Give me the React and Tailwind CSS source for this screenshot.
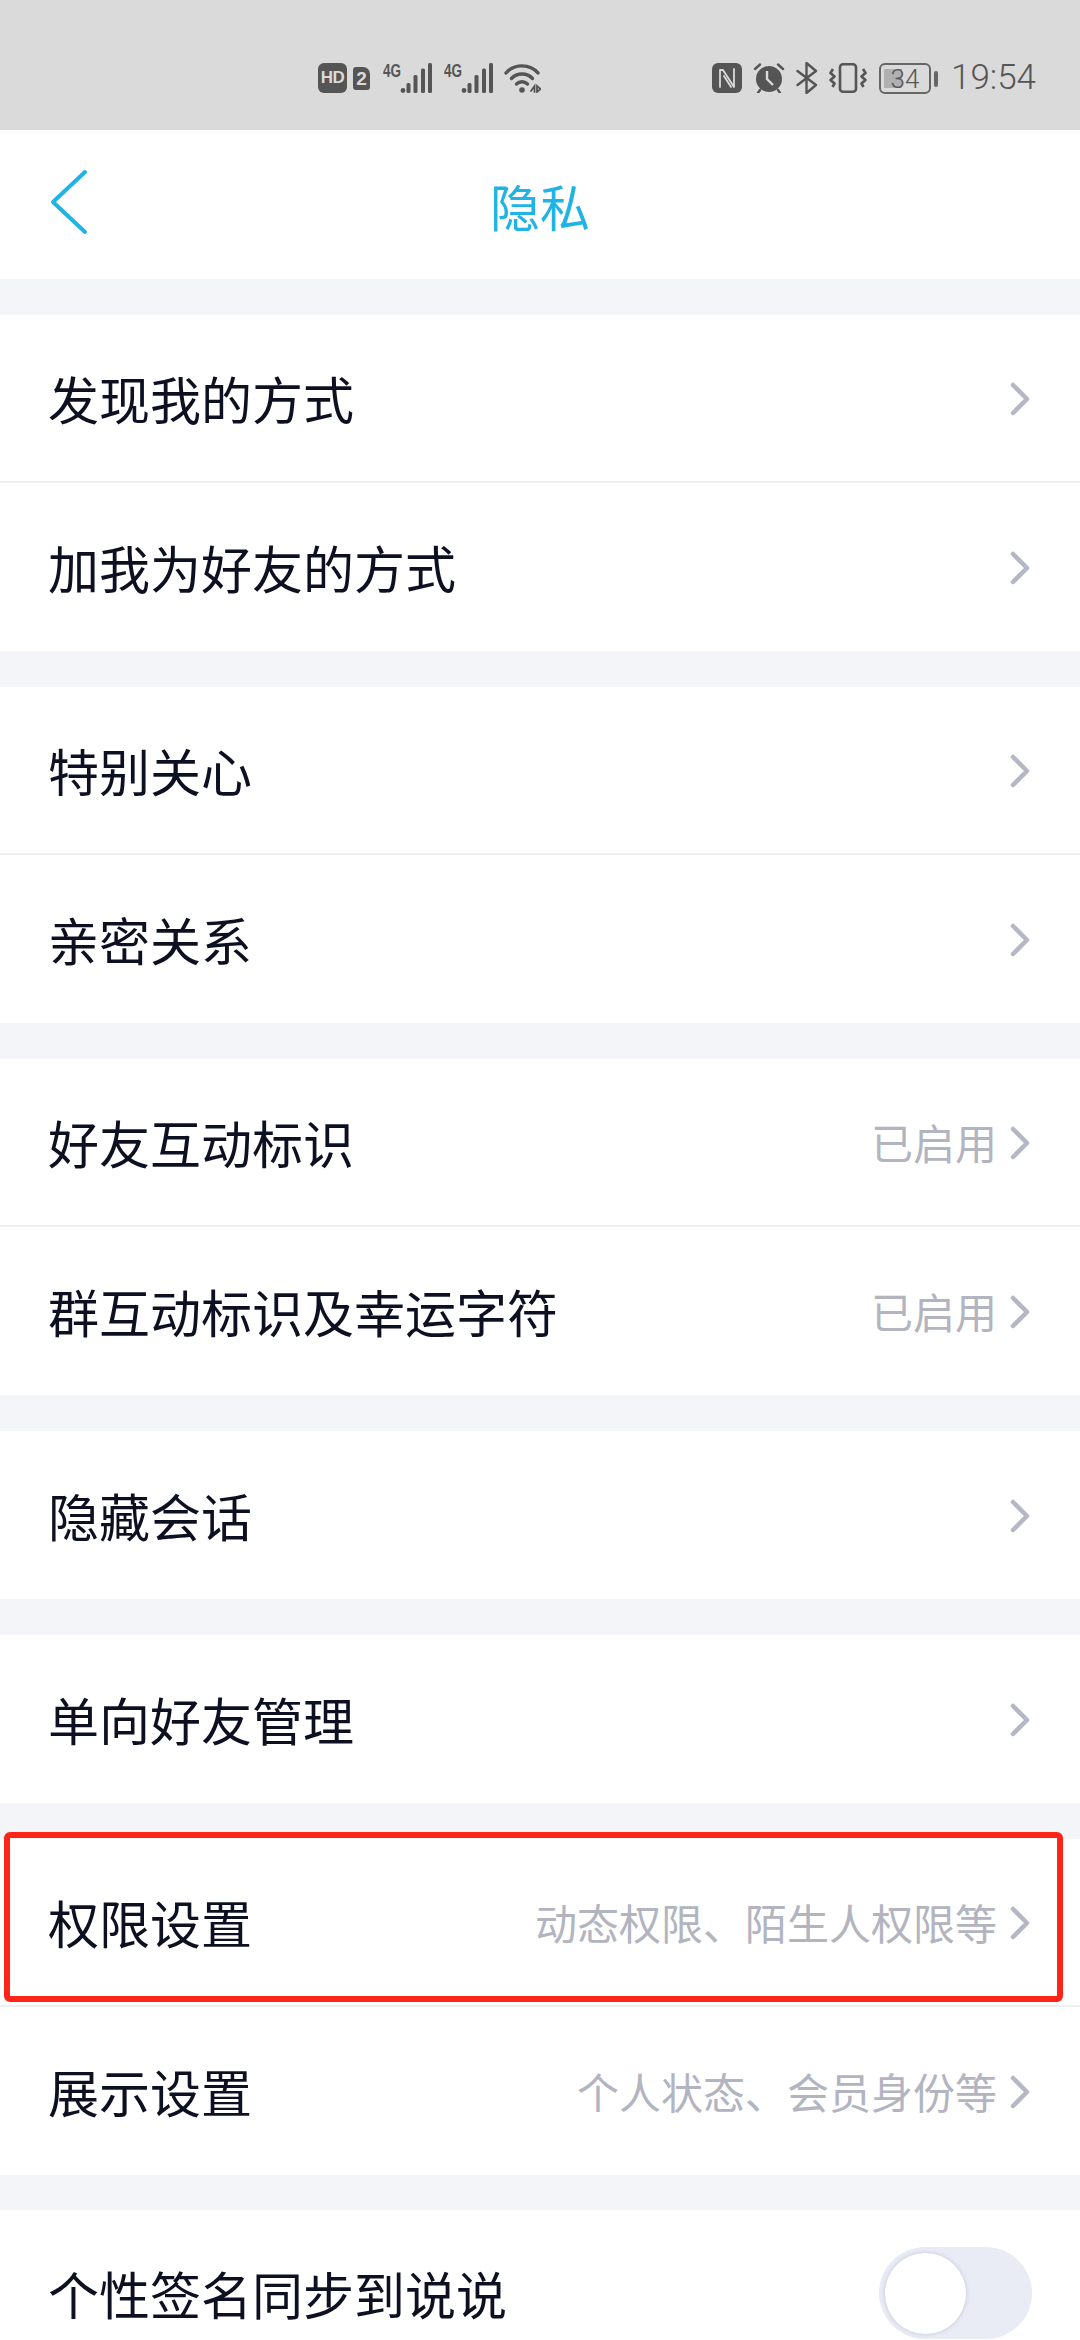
const FONT = 'font-["Noto_Sans_CJK_SC","Noto_Sans",sans-serif]';

// ── Status bar pieces ────────────────────────────────────────────────────
function Signal() {
  return (
    <svg width="50" height="34" viewBox="0 -4 50 34" className="block -mt-[4px]">
      <text x="0" y="14" fontSize="19" fontWeight="700" fill="#555" fontFamily="Liberation Sans" textLength="18" lengthAdjust="spacingAndGlyphs">4G</text>
      <circle cx="20" cy="27.500" r="2.400" fill="#555" />
      <rect x="23.500" y="20" width="4" height="10" rx="1.500" fill="#555" />
      <rect x="30.500" y="12" width="4" height="18" rx="1.500" fill="#555" />
      <rect x="38" y="5.500" width="4" height="24.500" rx="1.500" fill="#555" />
      <rect x="45" y="0" width="4" height="30" rx="1.500" fill="#555" />
    </svg>
  );
}

function Wifi() {
  return (
    <svg width="37" height="30" viewBox="0 0 37 30" fill="none" stroke="#555" strokeWidth="3.400" strokeLinecap="round" className="block">
      <path d="M2 10 C10 0.500 26 0.500 34 10" />
      <path d="M7.500 15.500 C13 9.500 23 9.500 28.500 15.500" />
      <path d="M12.500 21 C15.500 18 20.500 18 23.500 21" />
      <circle cx="18" cy="27" r="2.800" fill="#555" stroke="none" />
      <path d="M27 28 L30.500 23 V29 M33 23 V29 L36.500 26 Z" strokeWidth="1.800" />
    </svg>
  );
}

function Nfc() {
  return (
    <svg width="30" height="30" viewBox="0 0 30 30" className="block">
      <rect x="0" y="0" width="30" height="30" rx="6" fill="#555" />
      <path d="M8 24 V7 H11 L22 24 V6 M12 13 L19 24" fill="none" stroke="#dadada" strokeWidth="1.800" strokeLinejoin="round" strokeLinecap="round" />
    </svg>
  );
}

function Alarm() {
  return (
    <svg width="34" height="30" viewBox="0 0 34 30" className="block">
      <circle cx="17" cy="16" r="13" fill="#555" />
      <path d="M3 6 L8 1.500 M31 6 L26 1.500 M8 27 L6 30 M26 27 L28 30" stroke="#555" strokeWidth="2.400" strokeLinecap="round" />
      <path d="M15 8 V16 L21 22" fill="none" stroke="#dadada" strokeWidth="2.400" />
    </svg>
  );
}

function Bluetooth() {
  return (
    <svg width="22" height="32" viewBox="0 0 22 32" fill="none" stroke="#555" strokeWidth="2.400" strokeLinejoin="round" strokeLinecap="round" className="block">
      <path d="M1.500 9 L20 23 L10.500 31 V1 L20 9 L1.500 23" />
    </svg>
  );
}

function Vibrate() {
  return (
    <svg width="38" height="30" viewBox="0 0 38 30" fill="none" stroke="#555" strokeWidth="2.600" strokeLinejoin="round" className="block">
      <rect x="11" y="1.300" width="16" height="27.400" rx="3" />
      <path d="M4 6 L1.500 10 L5.500 13.500 L1.500 17 L5.500 20.500 L3.500 24" />
      <path d="M34 6 L36.500 10 L32.500 13.500 L36.500 17 L32.500 20.500 L34.500 24" />
    </svg>
  );
}

function Battery() {
  return (
    <div className="flex items-center gap-[3px]">
      <div className="relative w-[52px] h-[31px] rounded-[6px] border-[2px] border-[#666] overflow-hidden">
        <div className="absolute left-[3px] top-[4px] bottom-[4px] w-[18px] bg-[#b0b0b0]" />
        <span className="relative flex h-full items-center justify-center text-[26px] leading-none font-light text-[#555] font-['Roboto',sans-serif]">34</span>
      </div>
      <div className="w-[4px] h-[16px] rounded-full bg-[#666]" />
    </div>
  );
}

function StatusBar() {
  return (
    <div className="h-[130px] bg-[#dadada] flex items-start justify-between pt-[63px] pl-[318px] pr-[44px]">
      <div className="flex items-start">
        <span className="w-[29px] h-[30px] rounded-[6px] bg-[#555] text-[#dadada] text-[17px] font-bold tracking-[-0.5px] leading-[30px] text-center font-['Liberation_Sans',sans-serif]">HD</span>
        <span className="ml-[6px] mt-[4px] w-[17px] h-[23px] rounded-[3px] rounded-tr-[7px] bg-[#555] text-[#dadada] text-[19px] font-bold leading-[23px] text-center font-['Liberation_Sans',sans-serif]">2</span>
        <div className="ml-[13px]"><Signal /></div>
        <div className="ml-[11px]"><Signal /></div>
        <div className="ml-[10px]"><Wifi /></div>
      </div>
      <div className="flex items-start">
        <Nfc />
        <div className="ml-[10px]"><Alarm /></div>
        <div className="ml-[10px] -mt-[1px]"><Bluetooth /></div>
        <div className="ml-[11px]"><Vibrate /></div>
        <div className="ml-[12px]"><Battery /></div>
        <span className="ml-[13px] text-[35px] leading-[30px] text-[#555] font-['Roboto',sans-serif] font-light">19:54</span>
      </div>
    </div>
  );
}

// ── Settings rows ────────────────────────────────────────────────────────
function Chevron() {
  return (
    <svg width="20" height="34" viewBox="0 0 20 34" fill="none" stroke="#b5b8c4" strokeWidth="4.500" strokeLinecap="round" strokeLinejoin="round" className="ml-[13px] mt-[2px]">
      <path d="M3 3 L17 17 L3 31" />
    </svg>
  );
}

function Row({ label, value, divider }) {
  return (
    <div className={`h-[168px] flex items-center pl-[48px] pr-[50px] bg-white ${divider ? 'border-b-2 border-[#eeeff2]' : ''}`}>
      <span className="text-[51px] leading-none text-[#0c1021]">{label}</span>
      <div className="ml-auto flex items-center">
        {value && <span className="text-[42px] leading-none text-[#b2b4bf]">{value}</span>}
        <Chevron />
      </div>
    </div>
  );
}

function Section({ rows }) {
  return (
    <section className="mb-[36px]">
      {rows.map((row, i) => (
        <Row key={row.label} {...row} divider={i < rows.length - 1} />
      ))}
    </section>
  );
}

const SECTIONS = [
  [{ label: '发现我的方式' }, { label: '加我为好友的方式' }],
  [{ label: '特别关心' }, { label: '亲密关系' }],
  [{ label: '好友互动标识', value: '已启用' }, { label: '群互动标识及幸运字符', value: '已启用' }],
  [{ label: '隐藏会话' }],
  [{ label: '单向好友管理' }],
  [{ label: '权限设置', value: '动态权限、陌生人权限等' }, { label: '展示设置', value: '个人状态、会员身份等' }],
];

export default function App() {
  return (
    <div className={`relative w-[1080px] h-[2340px] overflow-hidden bg-[#f4f5f9] ${FONT}`}>
      <StatusBar />

      <header className="relative h-[149px] mb-[36px] bg-white flex items-center justify-center">
        <svg width="40" height="66" viewBox="0 0 40 66" fill="none" stroke="#1fb3e6" strokeWidth="4" strokeLinecap="round" strokeLinejoin="round" className="absolute left-[50px] top-[39px]">
          <path d="M35 3 L3 33 L35 63" />
        </svg>
        <h1 className="text-[50px] leading-none font-normal text-[#1fb3e6]">隐私</h1>
      </header>

      {SECTIONS.map(rows => <Section key={rows[0].label} rows={rows} />)}

      <div className="h-[166px] -mt-[1px] flex items-center pl-[48px] pr-[48px] bg-white">
        <span className="text-[51px] leading-none text-[#0c1021]">个性签名同步到说说</span>
        <div className="ml-auto w-[153px] h-[92px] rounded-full bg-[#e9ebf5] p-[6px]">
          <div className="w-[81px] h-[81px] rounded-full bg-white shadow-[0_0_4px_rgba(120,125,160,0.35)]" />
        </div>
      </div>

      {/* red highlight around the permissions row */}
      <div className="absolute left-[4px] top-[1832px] w-[1059px] h-[170px] rounded-[6px] border-[6px] border-[#ff2418]" />
    </div>
  );
}
